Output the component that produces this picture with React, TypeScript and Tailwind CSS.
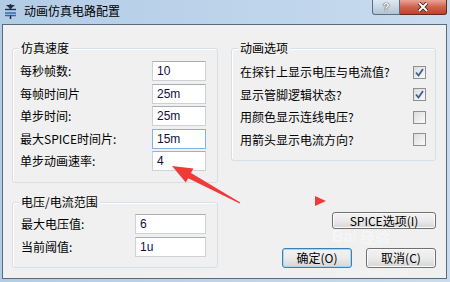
import React from 'react'

const cjk = { fontFamily: '"Noto Sans CJK SC", "Noto Sans", sans-serif' }
const latin = { fontFamily: '"Liberation Sans", Arial, sans-serif' }

function Field({ value, focused }: { value: string; focused?: boolean }) {
  return (
    <div
      style={latin}
      className={
        'h-[20px] flex items-center pl-[4px] text-[12px] text-[#101040] bg-white border ' +
        (focused ? 'border-[#7eb4ea]' : 'border-[#cdd2d8] border-t-[#abadb3]')
      }
    >
      {value}
    </div>
  )
}

function Check({ on }: { on?: boolean }) {
  return (
    <div className="w-[13px] h-[13px] border border-[#8f8f8f] bg-gradient-to-br from-[#dcdcdc] to-[#fbfbfb] flex items-center justify-center">
      {on && (
        <svg width="11" height="11" viewBox="0 0 11 11">
          <path d="M2 5.5 L4.5 8.5 L9 2" fill="none" stroke="#3f5e9a" strokeWidth="1.8" />
        </svg>
      )}
    </div>
  )
}

function Group({ title, className, children }: { title: string; className: string; children: React.ReactNode }) {
  return (
    <div className={'relative border border-[#d5dfe5] rounded-[3px] shadow-[inset_1px_1px_0_#ffffff] ' + className}>
      <span className="absolute left-[6px] top-[-9px] px-[2px] bg-[#f0f0f0] text-[12px] leading-[16px] text-black">{title}</span>
      {children}
    </div>
  )
}

function Btn({ label, focused, className }: { label: string; focused?: boolean; className: string }) {
  return (
    <div
      className={
        'flex items-center justify-center rounded-[3px] border text-[12px] leading-[14px] text-black bg-gradient-to-b from-[#f2f2f2] via-[#ebebeb] to-[#d6d6d6] ' +
        (focused ? 'border-[#3c7fb1] shadow-[inset_0_0_0_1px_#a6d6f4]' : 'border-[#707070] shadow-[inset_0_0_0_1px_#fbfbfb]') +
        ' ' +
        className
      }
    >
      {label}
    </div>
  )
}

const speedRows = [
  ['每秒帧数:', '10'],
  ['每帧时间片', '25m'],
  ['单步时间:', '25m'],
  ['最大SPICE时间片:', '15m'],
  ['单步动画速率:', '4'],
]

const options: [string, boolean][] = [
  ['在探针上显示电压与电流值?', true],
  ['显示管脚逻辑状态?', true],
  ['用颜色显示连线电压?', false],
  ['用箭头显示电流方向?', false],
]

export default function App() {
  return (
    <div style={cjk} className="relative w-[450px] h-[282px] overflow-hidden bg-gradient-to-r from-[#b3cce6] via-[#bcd3ea] to-[#c9dcef] flex flex-col">
      <div className="h-[24px] flex items-start">
        <div className="flex items-center h-[22px] pl-[4px] gap-[7px]">
          <svg width="13" height="15" viewBox="0 0 13 15">
            <path d="M6.5 0 V5" stroke="#1b2a44" strokeWidth="1.5" />
            <path d="M2 1 L6.5 5 L11 1 Z" fill="#20304c" />
            <path d="M1 5.5 H12" stroke="#20304c" strokeWidth="1.4" />
            <path d="M1 9 H12 M1 11.5 H12" stroke="#2d6bb4" strokeWidth="1.4" />
            <path d="M6.5 11.5 V15" stroke="#1b2a44" strokeWidth="1.5" />
          </svg>
          <span className="text-[12px] leading-[16px] text-black">动画仿真电路配置</span>
        </div>
        <div className="ml-auto mr-[3px] flex">
          <div style={latin} className="w-[28px] h-[15px] rounded-bl-[3px] border border-t-0 border-[#5b6d80] bg-gradient-to-b from-[#dfe8f1] to-[#b3c4d6] flex items-center justify-center text-[11px] leading-[11px] font-bold text-white [text-shadow:0_0_1px_#333,0_0_1px_#333]">
            ?
          </div>
          <div className="w-[47px] h-[15px] rounded-br-[3px] border border-t-0 border-l-0 border-[#5b2a24] bg-gradient-to-b from-[#e8a597] via-[#d0614c] to-[#c2402c] flex items-center justify-center">
            <svg width="12" height="10" viewBox="0 0 12 10">
              <path d="M2 1 L10 9 M10 1 L2 9" stroke="#3a1a16" strokeWidth="3.6" />
              <path d="M2 1 L10 9 M10 1 L2 9" stroke="#ffffff" strokeWidth="2" />
            </svg>
          </div>
        </div>
      </div>

      <div className="ml-[2px] w-[445px] h-[255px] border border-[#5c6b7b] bg-[#f0f0f0] flex pl-[9px] pt-[23px] gap-[13px]">
        <div className="w-[206px] flex flex-col">
          <Group title="仿真速度" className="pt-[12px] pb-[11px] pl-[7px] pr-[11px] flex flex-col gap-[2.5px]">
            {speedRows.map(([l, v], i) => (
              <div key={l} className="flex items-center justify-between h-[20px]">
                <span className="text-[12px] leading-[16px] text-black">{l}</span>
                <div className="w-[54px]">
                  <Field value={v} focused={i === 3} />
                </div>
              </div>
            ))}
          </Group>
          <Group title="电压/电流范围" className="mt-[19px] pt-[11px] pb-[10px] pl-[8px] pr-[11px] flex flex-col gap-[3px]">
            {[
              ['最大电压值:', '6'],
              ['当前阈值:', '1u'],
            ].map(([l, v]) => (
              <div key={l} className="flex items-center justify-between h-[20px]">
                <span className="text-[12px] leading-[16px] text-black">{l}</span>
                <div className="w-[71px]">
                  <Field value={v} />
                </div>
              </div>
            ))}
          </Group>
        </div>

        <div className="w-[205px] flex flex-col">
          <Group title="动画选项" className="pt-[12px] pb-[9px] pl-[8px] pr-[9px] flex flex-col">
            {options.map(([l, on]) => (
              <div key={l} className="flex items-center justify-between h-[22.5px]">
                <span className="text-[12px] leading-[16px] text-black">{l}</span>
                <Check on={on} />
              </div>
            ))}
          </Group>
          <Btn label="SPICE选项(I)" className="self-end mt-[51px] w-[104px] h-[17px]" />
          <div className="self-end mt-[19px] flex gap-[14px]">
            <Btn label="确定(O)" focused className="w-[70px] h-[20px]" />
            <Btn label="取消(C)" className="w-[70px] h-[20px]" />
          </div>
        </div>
      </div>

      <div className="absolute left-[332px] top-[228px] flex items-end gap-[3px] text-[#ffffff]/40 pointer-events-none">
        <span style={latin} className="text-[16px] font-bold leading-[18px]">Bai</span>
        <span className="text-[15px] font-bold leading-[18px]">经验</span>
      </div>
      <span style={latin} className="absolute left-[336px] top-[268px] text-[9px] leading-[10px] text-[#ffffff]/40 pointer-events-none">
        jingyan.baidu.com
      </span>

      <svg className="absolute left-0 top-0 pointer-events-none" width="450" height="282" viewBox="0 0 450 282">
        <polygon
          points="172,166 193.4,168.6 191,173 240.3,202.4 239.7,203.6 188.2,178.2 185.8,182.6"
          fill="#f03a3a"
        />
        <polygon points="315,196 326,201 315,206" fill="#f03a3a" />
      </svg>
    </div>
  )
}
